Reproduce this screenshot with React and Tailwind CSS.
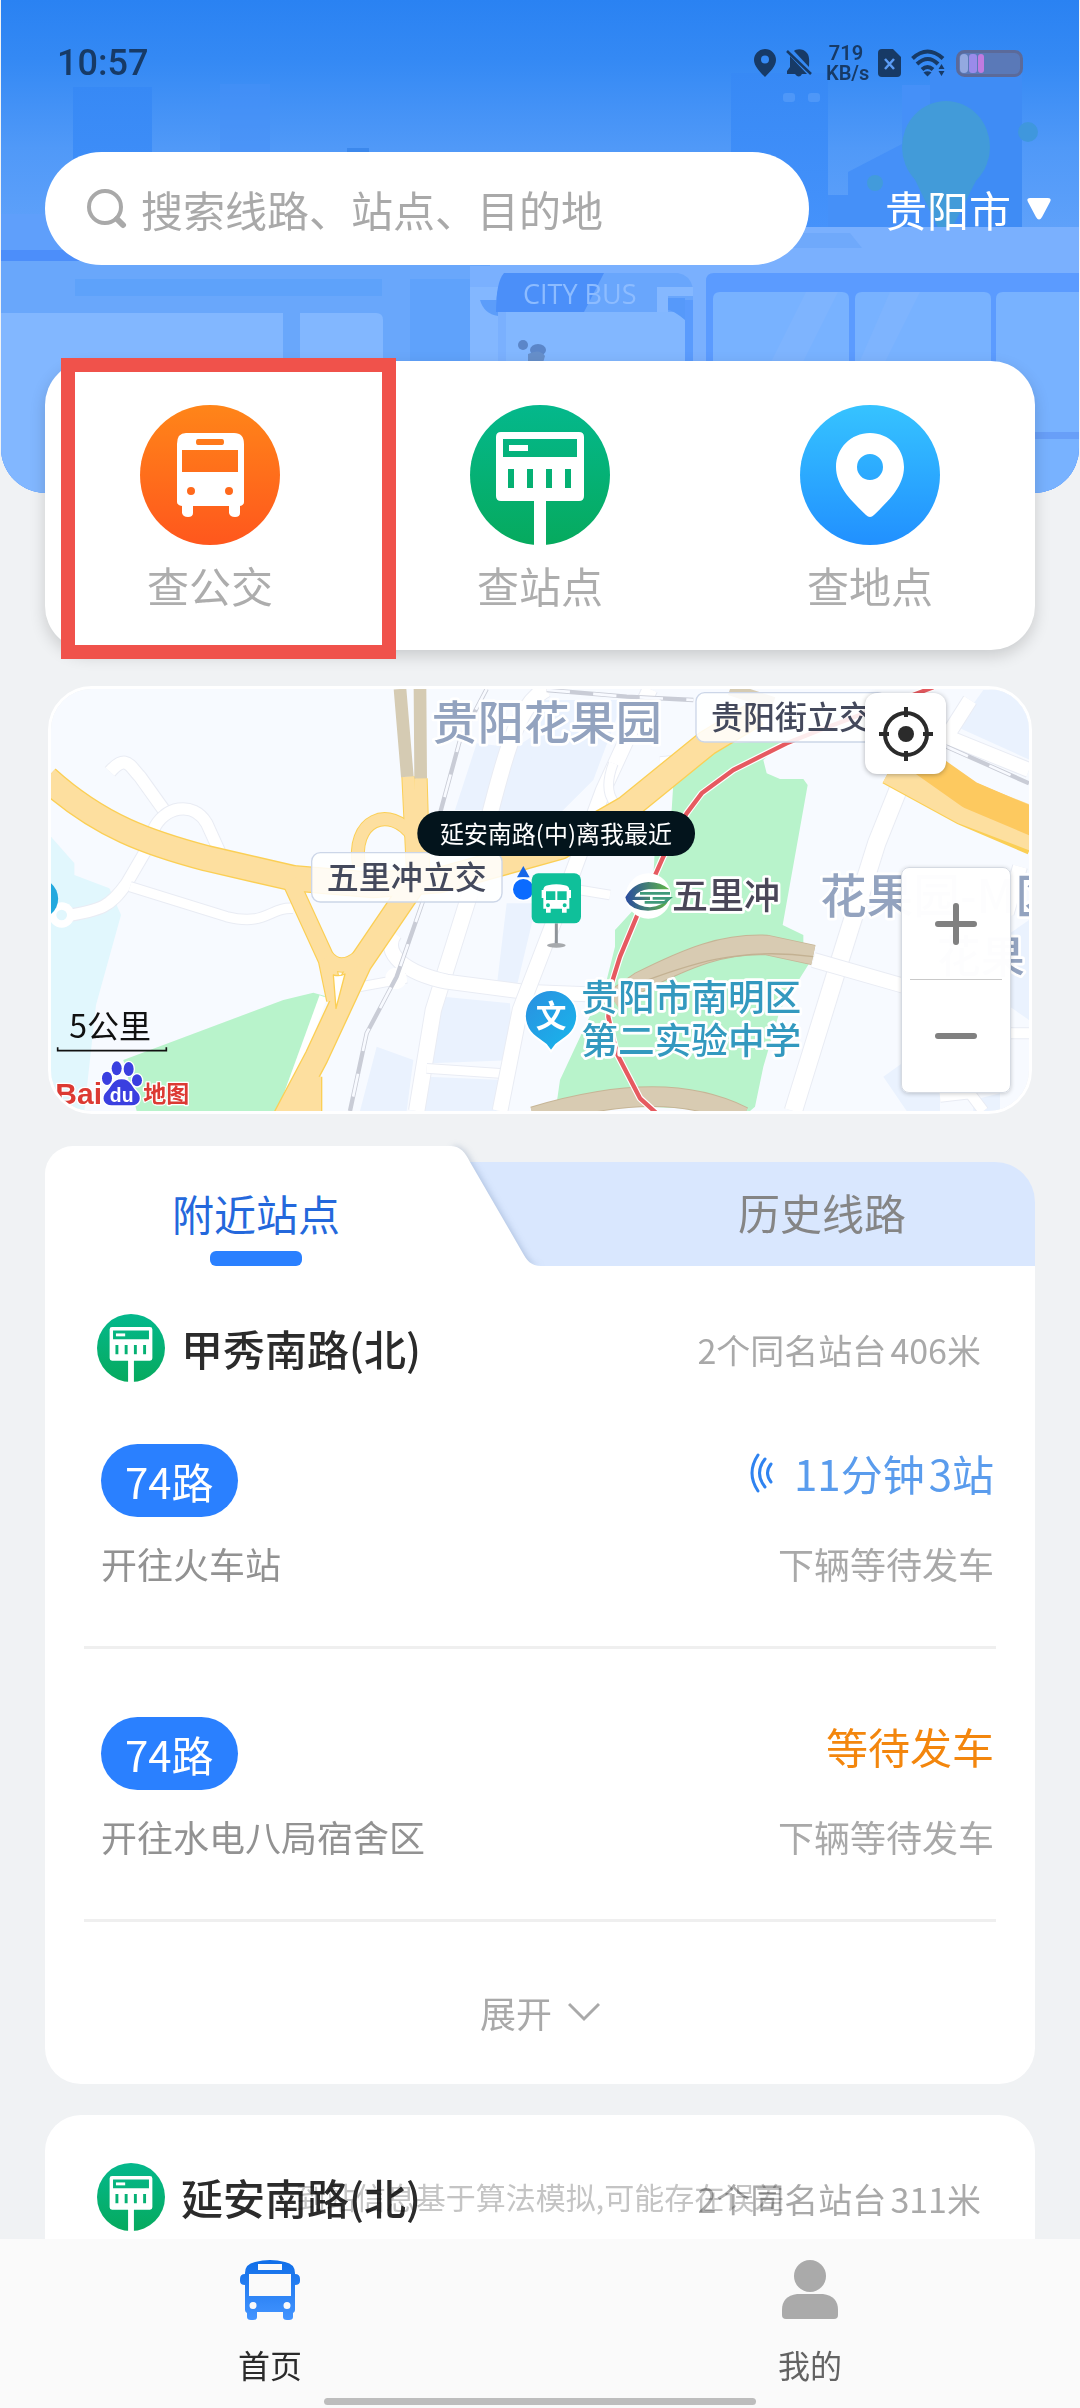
import React from "react";

const routes = [
  { line: "74路", to: "开往火车站", live: true, next: "下辆等待发车" },
  { line: "74路", to: "开往水电八局宿舍区", live: false, next: "下辆等待发车" },
];

function CityBackdrop() {
  return (
    <svg
      className="absolute inset-0 h-full w-full"
      viewBox="0 0 1080 493"
      preserveAspectRatio="xMidYMin slice"
      aria-hidden="true"
    >
      <defs>
        <linearGradient id="sky" x1="0" y1="0" x2="0" y2="1">
          <stop offset="0" stopColor="#2a82f2" />
          <stop offset="0.12" stopColor="#3489f4" />
          <stop offset="0.3" stopColor="#5099f8" />
          <stop offset="0.55" stopColor="#66a5fb" />
          <stop offset="1" stopColor="#80b4ff" />
        </linearGradient>
        <linearGradient id="tower" x1="0" y1="0" x2="0" y2="1">
          <stop offset="0" stopColor="#3789f5" />
          <stop offset="1" stopColor="#4592fb" />
        </linearGradient>
      </defs>
      <rect width="1080" height="493" fill="url(#sky)" />
      <rect x="73" y="87" width="79" height="163" fill="url(#tower)" />
      <rect x="220" y="84" width="50" height="166" fill="#458ff7" opacity="0.5" />
      <rect x="347" y="148" width="22" height="20" fill="#3c88ec" />
      <rect x="731" y="73" width="97" height="155" fill="url(#tower)" />
      <rect x="783" y="93" width="12" height="9" rx="3" fill="#4e97f8" />
      <rect x="808" y="93" width="12" height="9" rx="3" fill="#4e97f8" />
      <path d="M848 172l54-28V85h120v143H828v-33h20z" fill="#4590f8" />
      <rect x="930" y="70" width="92" height="158" fill="#3f8cf5" />
      <ellipse cx="946" cy="147" rx="44" ry="46" fill="#429bd9" />
      <path d="M908 165h76l-32 63h-14z" fill="#429bd9" />
      <circle cx="1028" cy="132" r="10" fill="#3f97dd" />
      <circle cx="875" cy="183" r="8" fill="#429bdb" />
      <rect x="0" y="214" width="480" height="36" fill="#5f9ffb" />
      <rect x="0" y="250" width="480" height="11" fill="#4c8efa" />
      <rect x="0" y="261" width="480" height="232" fill="#69a7fb" />
      <rect x="75" y="279" width="307" height="17" fill="#5ea2fa" />
      <path d="M0 313h283v180H0zM300 313h76q7 0 7 7v173h-83z" fill="#82b7ff" />
      <rect x="410" y="279" width="60" height="214" fill="#5fa2fb" />
      <path d="M490 227h590v266H470V266h20z" fill="#7ab0fe" />
      <path d="M790 233h60l12 15H790z" fill="#6fa9fb" />
      <path d="M470 287h28v206h-28z" fill="#83b7ff" />
      <path d="M480 300h18v16q-14-2-18-16z" fill="#5c9dfa" />
      <path d="M506 273h172q12 2 15 15v205h-8V312H496q0-30 10-39z" fill="#69a6fc" />
      <path d="M504 273h100l-20 39h-88q0-30 8-39z" fill="#4b8ff9" />
      <path d="M506 312h170q9 0 9 10v171H506z" fill="#82b7ff" />
      <path d="M657 312v-25h36v9h-25v16z" fill="#85b8ff" />
      <path d="M668 298h17v22q-12-10-17-10z" fill="#5699fa" />
      <rect x="685" y="300" width="8" height="193" fill="#5a9bfd" />
      <text x="523" y="304" fontSize="27" fontWeight="500" fill="#8dbcff" fontFamily="Open Sans, sans-serif">
        CITY BUS
      </text>
      <circle cx="523" cy="345" r="5" fill="#5b86c9" />
      <ellipse cx="538" cy="350" rx="8" ry="6" fill="#5b86c9" />
      <path d="M528 354q12-6 17 2l-3 10h-14z" fill="#668fca" />
      <path d="M706 493V281q0-8 8-8h366v220z" fill="#5b9bff" />
      <path d="M713 493V299q0-7 7-7h122q7 0 7 7v194zM855 493V299q0-7 7-7h122q7 0 7 7v194zM996 493V299q0-7 7-7h77v201z" fill="#78b2ff" />
      <path d="M806 292h32l-40 80h-32zM890 292h30l-40 80h-25z" fill="#7eb4fe" />
      <rect x="1020" y="432" width="60" height="7" fill="#689ff8" />
    </svg>
  );
}

function StatusIcons() {
  return (
    <div className="flex items-center text-[#173a66]">
      <svg width="22" height="28" viewBox="0 0 22 28" fill="currentColor" aria-hidden="true">
        <path fillRule="evenodd" d="M11 0a11 11 0 0 1 11 11c0 6-6 12-11 17C6 23 0 17 0 11A11 11 0 0 1 11 0zm0 6.500a4 4 0 1 0 0 8 4 4 0 0 0 0-8z" />
      </svg>
      <svg className="ml-2.5" width="26" height="28" viewBox="0 0 26 28" fill="currentColor" aria-hidden="true">
        <path d="M8 2c2-2 9-3 13 2 3 4 2 9 2 14zM4 7l17 18h-5q-3 5-7 0H1v-3l3-4z" />
        <path d="M1 2l24 23" stroke="currentColor" strokeWidth="2.500" />
      </svg>
      <div className="ml-3.5 w-10 text-center font-[Roboto] text-xl leading-5 font-semibold">
        <div>719</div>
        <div>KB/s</div>
      </div>
      <svg className="ml-3" width="23" height="28" viewBox="0 0 23 28" aria-hidden="true">
        <path d="M4 0h11l8 8v16q0 4-4 4H4q-4 0-4-4V4q0-4 4-4z" fill="currentColor" />
        <path d="M7 10l9 10M16 10L7 20" stroke="#5b9cf5" strokeWidth="2.500" />
      </svg>
      <svg className="ml-2.5" width="35" height="28" viewBox="0 0 35 28" fill="none" stroke="currentColor" strokeWidth="4" aria-hidden="true">
        <path d="M1.500 9.500q15-14 30.500 0M6 15q11-10 21 0M11 20.500q5.500-5 11 0" />
        <path d="M12.500 23.500q4-2.500 8 0l-4 4z" fill="currentColor" stroke="none" />
        <path d="M30.500 15l3 5h-6zM30.500 27l3-5h-6z" fill="currentColor" stroke="none" />
      </svg>
      <svg className="ml-2.5" width="67" height="27" viewBox="0 0 67 27" aria-hidden="true">
        <rect x="1.500" y="1.500" width="64" height="24" rx="7" fill="#5a79b8" stroke="#5b6a9a" strokeWidth="3" />
        <rect x="4" y="4" width="8" height="19" rx="4" fill="#93a9e0" />
        <rect x="13" y="4" width="8" height="19" rx="3" fill="#9a8bea" />
        <rect x="22" y="4" width="6" height="19" rx="3" fill="#c07be0" />
      </svg>
    </div>
  );
}

function BusCircle() {
  return (
    <svg className="size-35" viewBox="0 0 140 140" aria-hidden="true">
      <defs>
        <linearGradient id="orange" x1="0" y1="0" x2="0" y2="1">
          <stop offset="0" stopColor="#ff8519" />
          <stop offset="1" stopColor="#ff571d" />
        </linearGradient>
      </defs>
      <circle cx="70" cy="70" r="70" fill="url(#orange)" />
      <path
        fill="#fff"
        fillRule="evenodd"
        d="M46 28h48q10 0 10 11v58q0 3-4 4v7q0 4-5 4t-6-4v-7H53v7q0 4-5 4t-6-4v-7q-5-1-5-4V39q0-11 9-11zm12 6q-2 0-2 3t2 3h24q2 0 2-3t-2-3zM42 45v22h56V45zM51 82a4 4 0 1 0 0 8 4 4 0 0 0 0-8zm38 0a4 4 0 1 0 0 8 4 4 0 0 0 0-8z"
      />
    </svg>
  );
}

function StopCircle({ className }) {
  return (
    <svg className={className} viewBox="0 0 140 140" aria-hidden="true">
      <defs>
        <linearGradient id="green" x1="0" y1="0" x2="0" y2="1">
          <stop offset="0" stopColor="#04b88c" />
          <stop offset="1" stopColor="#06aa5e" />
        </linearGradient>
      </defs>
      <circle cx="70" cy="70" r="70" fill="url(#green)" />
      <path
        fill="#fff"
        fillRule="evenodd"
        d="M31 27h78q5 0 5 5v59q0 5-5 5H76v44H64V96H31q-5 0-5-5V32q0-5 5-5zm2 7v18h74V34zM38 64v19h6V64zm19 0v19h6V64zm19 0v19h6V64zm19 0v19h6V64z"
      />
      <path d="M39 40h19v6H39z" fill="#fff" />
    </svg>
  );
}

function PlaceCircle() {
  return (
    <svg className="size-35" viewBox="0 0 140 140" aria-hidden="true">
      <defs>
        <linearGradient id="azure" x1="0" y1="0" x2="0" y2="1">
          <stop offset="0" stopColor="#36c3ff" />
          <stop offset="1" stopColor="#2190ff" />
        </linearGradient>
      </defs>
      <circle cx="70" cy="70" r="70" fill="url(#azure)" />
      <path
        fill="#fff"
        fillRule="evenodd"
        d="M70 28c19 0 34 15 34 34 0 21-19 37-30 48q-4 4-8 0C55 99 36 83 36 62c0-19 15-34 34-34zm0 21a13 13 0 1 0 0 26 13 13 0 0 0 0-26z"
      />
    </svg>
  );
}

function SmallRoad({ d, w = 34 }) {
  return (
    <g fill="none" strokeLinejoin="round">
      <path d={d} stroke="#e9ecf4" strokeWidth={w + 6} />
      <path d={d} stroke="#fff" strokeWidth={w} />
    </g>
  );
}

function MapDrawing() {
  return (
    <svg
      className="block h-[422px] w-full"
      viewBox="33 27 2934 1266"
      preserveAspectRatio="xMidYMid slice"
      role="img"
      aria-label="地图"
    >
      <defs>
        <linearGradient id="poi" x1="0" y1="0" x2="1" y2="1">
          <stop offset="0" stopColor="#2b8fe0" />
          <stop offset="1" stopColor="#17b8ec" />
        </linearGradient>
        <linearGradient id="metro" x1="0" y1="0" x2="1" y2="0">
          <stop offset="0" stopColor="#2a4ba0" />
          <stop offset="1" stopColor="#5fb646" />
        </linearGradient>
      </defs>
      <rect x="0" y="0" width="3000" height="1320" fill="#f7faff" />

      {/* city blocks and water */}
      <g fill="#eaf2fe">
        <path d="M1310 190L1400 200 1330 390 1245 390zM1430 200L1640 60 1750 60 1660 300 1560 400 1370 390z" />
        <path d="M1400 670h90l-60 250h-60zM1210 950l200 20 10 170-250 10zM1010 1100l110 40-20 153H960zM1160 1190l230 10-20 93h-215z" />
        <path d="M1500 60h120L1560 300l-110 90zM2750 140L2830 30h140v210zM2910 760l57-40v300l-57-40z" />
        <path d="M2530 1190l70-50 100 60v93h-100zM2800 1260l80-20v53h-80z" />
      </g>
      <path d="M33 470l70 80v35l105 40 35 80-75 270-35 318H33z" fill="#e1f7fd" />
      <path d="M250 1140L730 960l90-22 35 10-125 345H290z" fill="#b8f3cb" />
      <path d="M1900 310L2060 190l180-10-70 60 10 40 40 17h70l13 18-75 420 62 30v25l30 40-100 160-50 170-25 120-15 13-580-23 10-70 140-300 25-100v-50l55-60 60-100 5-90 50-110z" fill="#b8f3cb" />

      {/* minor streets */}
      <SmallRoad d="M210 275C260 220 270 260 300 290L375 395" w={36} />
      <SmallRoad d="M340 450C370 380 460 360 500 430L550 540" />
      <SmallRoad d="M65 710C190 690 210 680 260 610L330 490" />
      <SmallRoad d="M270 620L560 710C680 740 690 680 760 685" w={28} />
      <SmallRoad d="M1520 27C1430 70 1390 250 1350 400M1290 640L1180 990 1130 1293" w={46} />
      <SmallRoad d="M1065 760C1020 820 1100 880 1220 905L1450 935 1700 945" w={42} />
      <SmallRoad d="M960 920L1100 895M1160 1165L1380 1180" w={26} />
      <SmallRoad d="M1830 27L1690 330 1590 600 1440 990 1380 1293" w={44} />
      <SmallRoad d="M1720 250C1690 330 1710 370 1760 400M1560 620L1710 645M1860 245L1960 235" w={26} />
      <SmallRoad d="M2590 290L2510 490 2400 840 2260 1293" w={52} />
      <SmallRoad d="M2320 840L2600 920M2790 60L2720 170 2967 270M2940 560L2900 700" w={42} />
      <SmallRoad d="M2700 1250L2790 1240 2830 1293M2880 1060H2967" w={30} />
      <path d="M850 950L725 1293" stroke="#fff" strokeWidth="24" fill="none" />
      <circle cx="65" cy="705" r="38" fill="#fff" />
      <circle cx="65" cy="705" r="16" fill="#e1f7fd" />
      <circle cx="1068" cy="895" r="32" fill="#fff" />

      {/* railway */}
      <g fill="none">
        <path d="M1340 27L1260 180 1200 400M1150 660L1070 890 980 1060 930 1293M1520 30L1760 50 1960 60M2720 200L2967 310" stroke="#c9ccd6" strokeWidth="13" />
        <path d="M1340 27L1260 180 1200 400M1150 660L1070 890 980 1060 930 1293M1520 30L1760 50 1960 60M2720 200L2967 310" stroke="#f8faff" strokeWidth="8" strokeDasharray="70 70" />
      </g>

      {/* arterial roads */}
      <g fill="none" strokeLinejoin="round">
        <g stroke="#fbcf55">
          <path d="M20 295C180 440 330 490 500 535L760 595 1000 615 1200 600 1560 500 1760 385 2000 190 2150 100" strokeWidth="80" />
          <path d="M750 600L860 840 885 960" strokeWidth="54" />
          <path d="M1130 600L960 850 830 1130 735 1310M810 1190V1293" strokeWidth="74" />
          <path d="M860 830Q900 880 960 830" strokeWidth="46" />
          <path d="M1105 290L1120 600M1142 295L1145 400 1150 600" strokeWidth="42" />
          <path d="M958 560C930 420 1050 370 1120 470" strokeWidth="42" />
          <path d="M2560 250L2780 370 2990 460" strokeWidth="136" />
        </g>
        <g stroke="#fddf9f">
          <path d="M20 295C180 440 330 490 500 535L760 595 1000 615 1200 600 1560 500 1760 385 2000 190 2150 100" strokeWidth="72" />
          <path d="M750 600L860 840 885 960" strokeWidth="47" />
          <path d="M1130 600L960 850 830 1130 735 1310M810 1190V1293" strokeWidth="66" />
          <path d="M860 830Q900 880 960 830" strokeWidth="40" />
          <path d="M1105 290L1120 600M1142 295L1145 400 1150 600" strokeWidth="36" />
          <path d="M958 560C930 420 1050 370 1120 470" strokeWidth="36" />
          <path d="M2560 250L2780 370 2990 450" strokeWidth="130" />
        </g>
        <path d="M2620 225L2790 345 2990 430" stroke="#fdc95f" strokeWidth="84" />
        <path d="M1080 27L1102 290M1140 27L1142 295M2070 27L2200 70" stroke="#d5cbb3" strokeWidth="38" />
        <path d="M1720 960L1800 905C1950 830 2050 790 2180 795L2320 825" stroke="#c6b596" strokeWidth="62" />
        <path d="M1720 960L1800 905C1950 830 2050 790 2180 795L2320 825" stroke="#d8cbb2" strokeWidth="56" />
        <path d="M1480 1310C1750 1230 1950 1230 2110 1310" stroke="#c6b596" strokeWidth="62" />
        <path d="M1480 1310C1750 1230 1950 1230 2110 1310" stroke="#d8cbb2" strokeWidth="56" />
        <path d="M1770 920C1950 850 2100 800 2320 830" stroke="#c3b192" strokeWidth="4" />
        <path d="M888 985L880 885Q900 890 915 882z" fill="#fff" stroke="#fbcf55" strokeWidth="4" />
        <path d="M2680 22L2340 150 2240 190 2080 270 1985 340 1940 400 1870 530 1790 710 1740 830 1715 910 1705 1010 1730 1120 1800 1255 1850 1300" stroke="#fff" strokeWidth="20" />
        <path d="M2680 22L2340 150 2240 190 2080 270 1985 340 1940 400 1870 530 1790 710 1740 830 1715 910 1705 1010 1730 1120 1800 1255 1850 1300" stroke="#e65a60" strokeWidth="13" />
      </g>

      {/* place names */}
      <g stroke="#fff" strokeWidth="16" strokeLinejoin="round" paintOrder="stroke" fontWeight="500">
        <text x="1520" y="176" fontSize="138" textAnchor="middle" fill="#93a3bf">贵阳花果园</text>
        <text x="2340" y="698" fontSize="140" fill="#93a3bf">花果园-M区</text>
        <text x="2690" y="880" fontSize="132" fill="#93a3bf">花果</text>
        <text x="1624" y="994" fontSize="110" fill="#3399bf">贵阳市南明区</text>
        <text x="1624" y="1122" fontSize="110" fill="#3399bf">第二实验中学</text>
      </g>
      <g>
        <rect x="815" y="518" width="571" height="148" rx="26" fill="#fff" fillOpacity="0.880" stroke="#ccd6e8" strokeWidth="4" />
        <text x="1100" y="627" fontSize="96" textAnchor="middle" fontWeight="500" fill="#44495c">五里冲立交</text>
        <rect x="1968" y="38" width="571" height="148" rx="26" fill="#fff" fillOpacity="0.880" stroke="#ccd6e8" strokeWidth="4" />
        <text x="2253" y="147" fontSize="96" textAnchor="middle" fontWeight="500" fill="#44495c">贵阳街立交</text>
      </g>

      {/* metro stop */}
      <circle cx="1825" cy="648" r="68" fill="#fff" />
      <path d="M1756 652Q1780 608 1825 606 1862 606 1888 628H1826Q1796 630 1784 650H1830V660H1776Q1798 682 1830 682 1868 680 1888 652 1880 692 1824 692 1776 692 1760 664z" fill="url(#metro)" />
      <path d="M1800 640h90M1838 655h50l-14 12h-60" stroke="#3f9a7a" strokeWidth="8" fill="none" />
      <text x="1896" y="686" fontSize="108" fontWeight="500" fill="#4a4658" stroke="#fff" strokeWidth="16" strokeLinejoin="round" paintOrder="stroke">五里冲</text>

      {/* school pin */}
      <path d="M1533 930a78 78 0 0 1 45 142l-30 22-15 20-15-20-30-22a78 78 0 0 1 45-142z" fill="url(#poi)" stroke="#fff" strokeWidth="6" />
      <text x="1533" y="1042" fontSize="92" textAnchor="middle" fontWeight="700" fill="#fff">文</text>
      <path d="M33 610a60 60 0 0 1 0 92z" fill="#22a9de" />

      {/* current position and nearest stop */}
      <path d="M1450 558l19 34h-38z" fill="#1766e8" />
      <circle cx="1450" cy="628" r="36" fill="#fff" />
      <circle cx="1450" cy="628" r="31" fill="#0b6bff" />
      <path d="M1549 730v64" stroke="#8f9499" strokeWidth="9" />
      <ellipse cx="1549" cy="796" rx="28" ry="7" fill="#a6a9ad" />
      <rect x="1475" y="580" width="148" height="150" rx="20" fill="#0fc09a" />
      <path fill="#fff" fillRule="evenodd" d="M1524 616q25-6 50 0 14 2 14 14h5v24h-5v32h-8v12h-14v-12h-34v12h-14v-12h-8v-32h-5v-24h5q0-12 14-14zm-6 18v26h28v-26zm34 0v26h28v-26zm-28 36a6 6 0 1 0 0 12 6 6 0 0 0 0-12zm50 0a6 6 0 1 0 0 12 6 6 0 0 0 0-12z" />
      <rect x="1132" y="393" width="833" height="135" rx="67" fill="#03141c" />
      <text x="1548" y="489" fontSize="72" textAnchor="middle" fill="#fff">延安南路(中)离我最近</text>

      {/* scale bar and provider mark */}
      <text x="88" y="1073" fontSize="96" fill="#111">5公里</text>
      <path d="M53 1102v10h326v-10" stroke="#111" strokeWidth="5" fill="none" />
      <g stroke="#fff" strokeWidth="8" strokeLinejoin="round" paintOrder="stroke">
        <text x="46" y="1271" fontSize="90" fill="#dc3a33" fontFamily="Liberation Sans, sans-serif" fontWeight="700">Bai</text>
        <text x="310" y="1265" fontSize="69" fill="#dc3a33" fontWeight="700">地图</text>
        <path d="M245 1198c28 0 30 24 46 38 16 16 8 40-16 40h-60c-24 0-32-24-16-40 16-14 18-38 46-38z" fill="#3a3fe0" />
        <ellipse cx="201" cy="1195" rx="15" ry="20" fill="#3a3fe0" />
        <ellipse cx="230" cy="1165" rx="15" ry="21" fill="#3a3fe0" />
        <ellipse cx="266" cy="1167" rx="15" ry="21" fill="#3a3fe0" />
        <ellipse cx="291" cy="1201" rx="15" ry="18" fill="#3a3fe0" />
      </g>
      <text x="245" y="1265" fontSize="58" textAnchor="middle" fill="#fff" fontFamily="Liberation Sans, sans-serif" fontWeight="700">du</text>
    </svg>
  );
}

function StationHeader({ name, distance }) {
  return (
    <div className="flex items-center pr-[54px] pl-[52px]">
      <StopCircle className="size-17 shrink-0" />
      <h2 className="ml-4 flex-1 text-[42px] leading-[60px] font-medium text-[#2b2b2b]">{name}</h2>
      <p className="flex gap-1 pt-1 text-[34px] leading-[48px] text-[#a9a9a9]">
        <span>2个同名站台</span>
        <span>{distance}</span>
      </p>
    </div>
  );
}

function RouteRow({ line, to, live, next }) {
  return (
    <li className="mx-[39px] border-b-[3px] border-[#efefef] pt-[68px] pr-0.5 pb-[59px] pl-[17px] first:pt-[62px]">
      <div className="flex items-start justify-between">
        <span className="rounded-full bg-[#2a80ff] px-6 text-[42px] leading-[73px] text-white">{line}</span>
        {live ? (
          <span className="flex items-center text-[42px] leading-[58px] text-[#5a9ced]">
            <svg className="mr-5" width="24" height="40" viewBox="0 0 24 40" fill="none" stroke="#2f83f0" strokeWidth="3" strokeLinecap="round" aria-hidden="true">
              <path d="M8 2Q-4 20 8 38M15 6Q4 20 15 34M21 11Q14 20 21 29" />
            </svg>
            11分钟
            <span className="ml-1">3站</span>
          </span>
        ) : (
          <span className="text-[42px] leading-[58px] text-[#f3860d]">等待发车</span>
        )}
      </div>
      <div className="mt-[22px] flex justify-between text-4xl leading-[48px]">
        <span className="text-[#929292]">{to}</span>
        <span className="text-[#a9a9a9]">{next}</span>
      </div>
    </li>
  );
}

function Shortcut({ icon, label }) {
  return (
    <button type="button" className="flex flex-1 flex-col items-center pt-11 pb-[35px]">
      {icon}
      <span className="mt-2.5 text-[42px] leading-[60px] text-[#adadad]">{label}</span>
    </button>
  );
}

export default function App() {
  return (
    <div className='flex h-screen flex-col overflow-hidden bg-[#f0f2f4] font-["Noto_Sans_CJK_SC",sans-serif]'>
      <div className="relative min-h-0 flex-1 overflow-hidden">
        <header className="relative mx-px overflow-hidden rounded-b-[45px] bg-[#66a5fb] pb-[228px]">
          <CityBackdrop />
          <div className="relative flex h-[126px] items-center justify-between px-14">
            <time className="font-[Roboto] text-4xl font-medium text-[#173a66]">10:57</time>
            <StatusIcons />
          </div>
          <div className="relative mt-[26px] flex items-center pr-[28px] pl-11">
            <label className="flex h-[113px] min-w-0 flex-1 items-center rounded-full bg-white pl-[42px]">
              <svg className="size-10 shrink-0" viewBox="0 0 40 40" fill="none" stroke="#a9a9a9" aria-hidden="true">
                <circle cx="18" cy="18" r="16" strokeWidth="4" />
                <path d="M30 30l6 6" strokeWidth="6" strokeLinecap="round" />
              </svg>
              <input
                type="text"
                aria-label="搜索"
                placeholder="搜索线路、站点、目的地"
                className="ml-3.5 h-full min-w-0 flex-1 bg-transparent pr-8 text-[42px] outline-none placeholder:text-[#a9a9a9]"
              />
            </label>
            <button type="button" className="ml-[76px] flex items-center text-[42px] leading-[60px] text-white">
              贵阳市
              <svg className="ml-4" width="24" height="24" viewBox="0 0 24 24" fill="#fff" aria-hidden="true">
                <path d="M3 1h18q4 0 2 4l-8 15q-3 5-6 0L1 5Q-1 1 3 1z" />
              </svg>
            </button>
          </div>
        </header>

        <section className="relative mx-[45px] -mt-[132px] flex rounded-[44px] bg-white shadow-[0_6px_16px_rgba(0,0,0,0.16)]">
          <Shortcut icon={<BusCircle />} label="查公交" />
          <Shortcut icon={<StopCircle className="size-35" />} label="查站点" />
          <Shortcut icon={<PlaceCircle />} label="查地点" />
          <div className="pointer-events-none absolute -top-[3px] -bottom-[9px] left-4 w-[335px] border-[14px] border-[#f0524b]" />
        </section>

        <section className="relative mx-12 mt-9 overflow-hidden rounded-[44px] border-[3px] border-white">
          <MapDrawing />
          <button
            type="button"
            aria-label="定位"
            className="absolute top-1 right-[83px] flex size-[81px] items-center justify-center rounded-xl bg-white shadow-[0_1px_5px_rgba(0,0,0,0.3)]"
          >
            <svg width="54" height="54" viewBox="0 0 54 54" fill="none" stroke="#2b2b2b" strokeWidth="4" aria-hidden="true">
              <circle cx="27" cy="27" r="21" />
              <circle cx="27" cy="27" r="8" fill="#2b2b2b" stroke="none" />
              <path d="M27 0v10M27 44v10M0 27h10M44 27h10" />
            </svg>
          </button>
          <div className="absolute right-[18px] bottom-[18px] flex w-[110px] flex-col divide-y divide-[#c9c9c9] rounded-lg border border-[#d5dae2] bg-white/98 px-2 shadow-[0_1px_4px_rgba(0,0,0,0.2)]">
            <button type="button" aria-label="放大" className="flex h-28 items-center justify-center">
              <svg width="42" height="42" viewBox="0 0 42 42" stroke="#808080" strokeWidth="6" strokeLinecap="round" aria-hidden="true">
                <path d="M3 21h36M21 3v36" />
              </svg>
            </button>
            <button type="button" aria-label="缩小" className="flex h-28 items-center justify-center">
              <svg width="42" height="42" viewBox="0 0 42 42" stroke="#808080" strokeWidth="6" strokeLinecap="round" aria-hidden="true">
                <path d="M3 21h36" />
              </svg>
            </button>
          </div>
        </section>

        <section className="mx-[45px] mt-8">
          <div className="flex items-end">
            <button type="button" className="relative z-10 flex h-[120px] w-[41%] flex-col items-center justify-end rounded-tl-[28px] bg-white pl-4">
              <span className="text-[42px] leading-[60px] text-[#2468dc]">附近站点</span>
              <span className="mt-2 h-[15px] w-[92px] rounded-md bg-[#2a80ff]" />
            </button>
            <svg className="relative h-[120px] w-[90px] shrink-0 drop-shadow-[2px_0_3px_rgba(60,90,140,0.25)]" viewBox="0 0 90 120" aria-hidden="true">
              <path d="M-1 0C9 0 14 6 19 16L70 104C76 115 80 120 90 120H-1z" fill="#fff" />
            </svg>
            <button type="button" className="-ml-[76px] h-[104px] flex-1 rounded-tr-[40px] bg-[#d9e7fe] pb-1 pl-[144px] text-[42px] leading-[60px] text-[#858585]">
              历史线路
            </button>
          </div>
          <div className="relative rounded-b-[36px] bg-white pt-12">
            <StationHeader name="甲秀南路(北)" distance="406米" />
            <ul>
              {routes.map((r) => (
                <RouteRow key={r.to} {...r} />
              ))}
            </ul>
            <button type="button" className="flex w-full items-center justify-center pt-[66px] pb-12 text-4xl leading-[48px] text-[#a9a9a9]">
              展开
              <svg className="ml-4" width="32" height="20" viewBox="0 0 32 20" fill="none" stroke="#a9a9a9" strokeWidth="3" aria-hidden="true">
                <path d="M1 2l15 15L31 2" />
              </svg>
            </button>
          </div>
        </section>

        <section className="mx-[45px] mt-[31px] rounded-t-[36px] bg-white pt-12 pb-[62px]">
          <StationHeader name="延安南路(北)" distance="311米" />
        </section>

        <p className="absolute inset-x-0 bottom-[23px] text-center text-3xl leading-10 text-[#c4c4c4] mix-blend-multiply">
          到站信息基于算法模拟,可能存在误差
        </p>
      </div>

      <nav className="bg-[#fafafa] pb-[3px]">
        <div className="flex">
          <a href="#home" className="flex flex-1 flex-col items-center pt-[21px] pb-0.5 text-[32px] leading-[48px] text-[#2b2b2b]">
            <svg width="60" height="60" viewBox="0 0 60 60" aria-hidden="true">
              <defs>
                <linearGradient id="tabBus" x1="0" y1="0" x2="0" y2="1">
                  <stop offset="0" stopColor="#0f6ee8" />
                  <stop offset="1" stopColor="#4394ff" />
                </linearGradient>
              </defs>
              <path
                fill="url(#tabBus)"
                fillRule="evenodd"
                d="M15 2q15-4 30 0 10 2 10 11v1q5 0 5 5v2q0 4-5 4v25q0 2-2 3v4q0 3-4 3h-2q-4 0-4-3v-5H17v5q0 3-4 3h-2q-4 0-4-3v-4q-2-1-2-3V25q-5 0-5-4v-2q0-5 5-5v-1q0-9 10-11zm3 2v6h24V4zm-9 10v22h42V14zm4 28a3.500 3.500 0 1 0 0 7 3.500 3.500 0 0 0 0-7zm34 0a3.500 3.500 0 1 0 0 7 3.500 3.500 0 0 0 0-7z"
              />
            </svg>
            <span className="mt-5">首页</span>
          </a>
          <a href="#mine" className="flex flex-1 flex-col items-center pt-[21px] pb-0.5 text-[32px] leading-[48px] text-[#636363]">
            <svg width="60" height="60" viewBox="0 0 60 60" fill="#aaa" aria-hidden="true">
              <circle cx="30" cy="16" r="16" />
              <path d="M17 34h26q15 2 15 16v5q0 4-4 4H6q-4 0-4-4v-5q0-14 15-16z" />
            </svg>
            <span className="mt-5">我的</span>
          </a>
        </div>
        <div className="mx-auto mt-2 h-[7px] w-2/5 rounded-full bg-[#bdbdbd]" />
      </nav>
    </div>
  );
}
